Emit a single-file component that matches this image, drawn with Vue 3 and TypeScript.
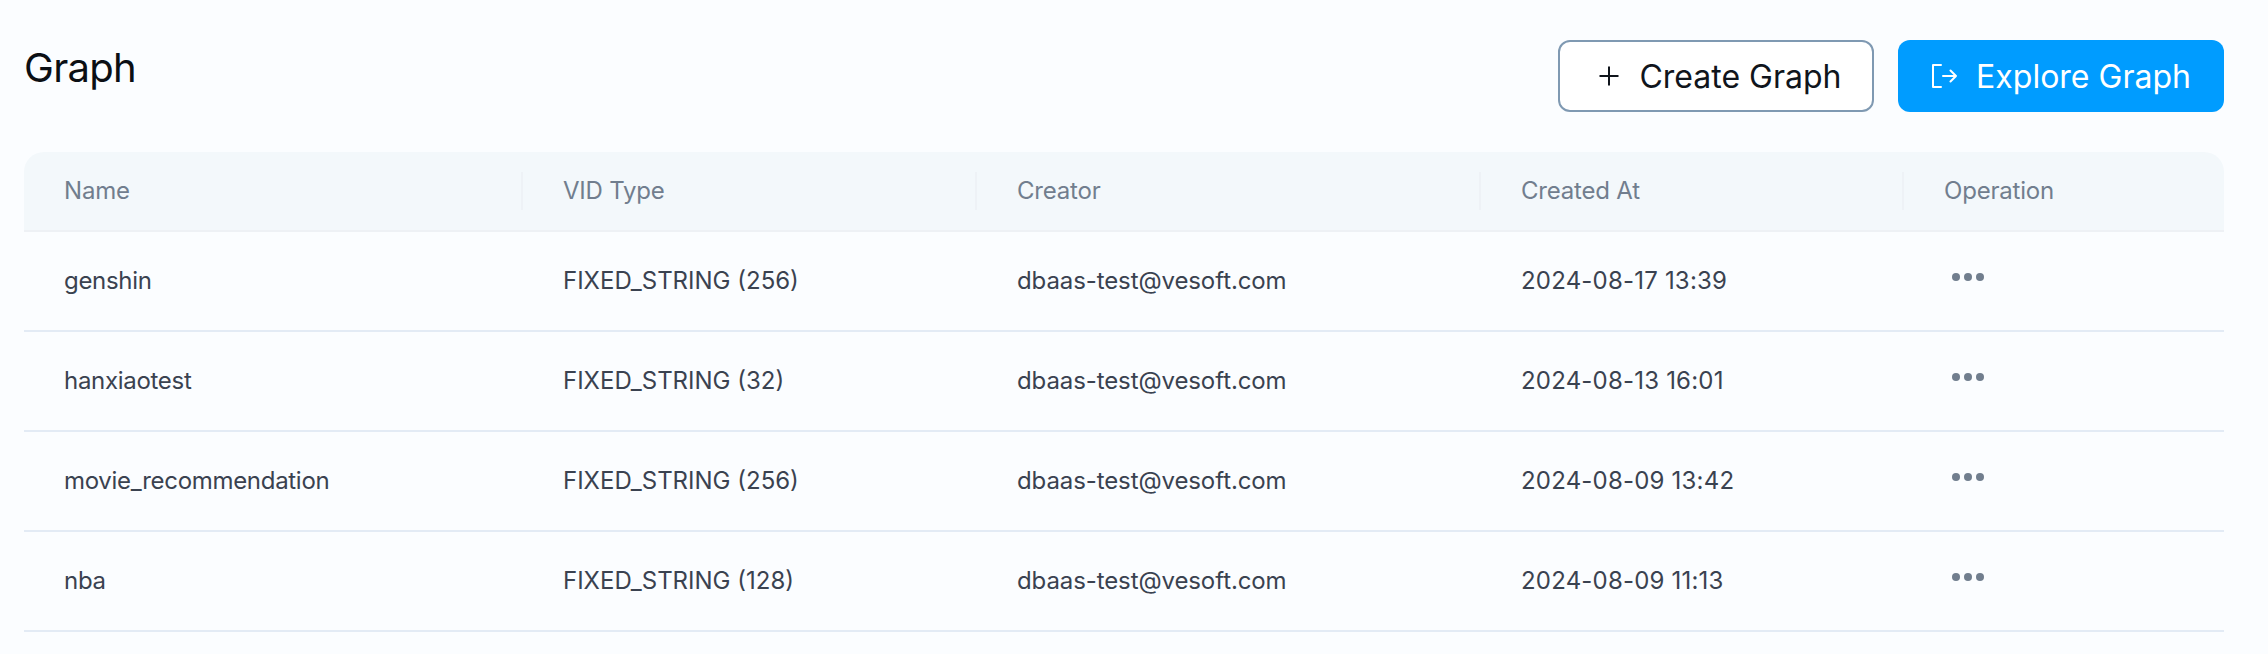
<script setup lang="ts">
interface Row { name: string; vid: string; creator: string; created: string }
const columns: string[] = ['Name', 'VID Type', 'Creator', 'Created At', 'Operation']
const rows: Row[] = [
  { name: 'genshin', vid: 'FIXED_STRING (256)', creator: 'dbaas-test@vesoft.com', created: '2024-08-17 13:39' },
  { name: 'hanxiaotest', vid: 'FIXED_STRING (32)', creator: 'dbaas-test@vesoft.com', created: '2024-08-13 16:01' },
  { name: 'movie_recommendation', vid: 'FIXED_STRING (256)', creator: 'dbaas-test@vesoft.com', created: '2024-08-09 13:42' },
  { name: 'nba', vid: 'FIXED_STRING (128)', creator: 'dbaas-test@vesoft.com', created: '2024-08-09 11:13' },
]
</script>

<template>
  <main class="page">
    <header class="top">
      <h1 class="title">Graph</h1>
      <div class="actions">
        <button class="btn btn-outline" type="button">
          <svg class="icon" width="22" height="22" viewBox="0 0 22 22" fill="none" stroke="#10151c" stroke-width="2">
            <path d="M11 1.500v19M1.500 11h19" />
          </svg>
          <span>Create Graph</span>
        </button>
        <button class="btn btn-primary" type="button">
          <svg class="icon" width="26" height="26" viewBox="0 0 26 26" fill="none" stroke="#fff" stroke-width="2" stroke-linejoin="round" stroke-linecap="round">
            <path d="M10 2H2v22h8M12 13h13M19.500 7.500 25 13l-5.500 5.500" />
          </svg>
          <span>Explore Graph</span>
        </button>
      </div>
    </header>
    <section class="table">
      <div class="row head">
        <div v-for="c in columns" :key="c" class="cell">{{ c }}</div>
      </div>
      <div v-for="r in rows" :key="r.name" class="row body">
        <div class="cell name">{{ r.name }}</div>
        <div class="cell">{{ r.vid }}</div>
        <div class="cell creator">{{ r.creator }}</div>
        <div class="cell date">{{ r.created }}</div>
        <div class="cell"><span class="more"><i></i><i></i><i></i></span></div>
      </div>
    </section>
  </main>
</template>

<style scoped>
.page {
  box-sizing: border-box;
  height: 654px;
  padding: 40px 44px 0 24px;
  background: #fbfdff;
  font-family: Inter, "Noto Sans", sans-serif;
  overflow: hidden;
}
.top {
  display: flex;
  justify-content: space-between;
  align-items: flex-start;
  height: 112px;
}
.title {
  margin: 3px 0 0;
  font-size: 40px;
  line-height: 50px;
  font-weight: 400;
  color: #0b0f14;
  letter-spacing: -0.7px;
}
.actions {
  display: flex;
  gap: 24px;
}
.btn {
  box-sizing: border-box;
  height: 72px;
  display: flex;
  align-items: center;
  justify-content: center;
  gap: 19px;
  border-radius: 12px;
  font-family: inherit;
  font-size: 32px;
  font-weight: 400;
  padding: 0;
}
.btn-outline {
  width: 316px;
  background: #fff;
  border: 2px solid #7f99b2;
  color: #10151c;
  padding-left: 8px;
}
.btn-primary {
  width: 326px;
  background: #009cff;
  border: none;
  color: #fff;
}
.table {
  width: 2200px;
}
.row {
  display: grid;
  grid-template-columns: 499px 454px 504px 423px 320px;
  align-items: center;
}
.head {
  height: 80px;
  background: #f3f8fb;
  border-radius: 20px 20px 0 0;
  border-bottom: 2px solid #eef1f5;
  box-sizing: border-box;
  color: #717e8e;
  letter-spacing: -0.2px;
}
.head .cell {
  position: relative;
}
.head .cell:not(:last-child)::after {
  content: "";
  position: absolute;
  right: 0;
  top: 0;
  bottom: 0;
  width: 2px;
  background: #eef2f6;
}
.body {
  height: 100px;
  box-sizing: border-box;
  border-bottom: 2px solid #e3ebf5;
  color: #3a4250;
}
.cell {
  padding-left: 40px;
  font-size: 24px;
  line-height: 38px;
  white-space: nowrap;
}
.name {
  letter-spacing: -0.3px;
}
.creator {
  letter-spacing: -0.1px;
}
.date {
  letter-spacing: 0.2px;
}
.more {
  display: flex;
  gap: 4px;
  margin: -8px 0 0 8px;
}
.more i {
  width: 8px;
  height: 8px;
  border-radius: 50%;
  background: #717e8e;
}
</style>

<style>
html, body { background: #fbfdff; }
</style>
